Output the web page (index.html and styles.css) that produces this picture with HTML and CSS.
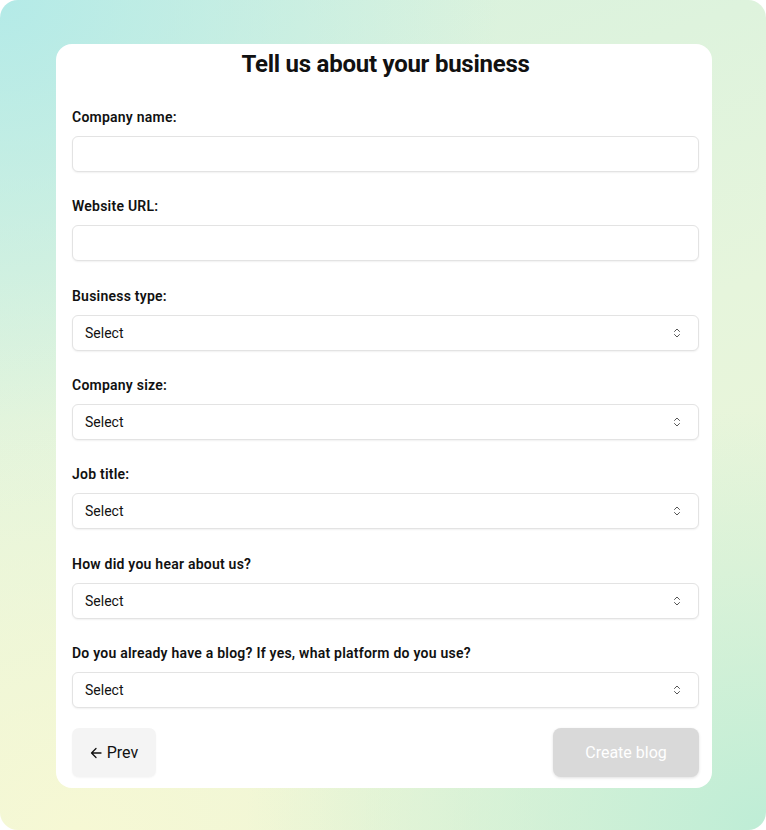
FILE: index.html
```html
<!DOCTYPE html>
<html>
<head>
<meta charset="utf-8">
<link rel="stylesheet" href="styles.css">
</head>
<body>
<div class="bg">
  <form class="card">
    <h1 class="title">Tell us about your business</h1>
    <div class="field">
      <label class="label">Company name:</label>
      <div class="input"></div>
    </div>
    <div class="field">
      <label class="label">Website URL:</label>
      <div class="input"></div>
    </div>
    <div class="field">
      <label class="label">Business type:</label>
      <div class="input select"><span>Select</span><svg class="chev" viewBox="0 0 8 12" width="8" height="12"><path d="M1.5 4.5 L4 2 L6.5 4.5 M1.5 7.5 L4 10 L6.5 7.5" fill="none" stroke="#555" stroke-width="1" stroke-linecap="round" stroke-linejoin="round"/></svg></div>
    </div>
    <div class="field">
      <label class="label">Company size:</label>
      <div class="input select"><span>Select</span><svg class="chev" viewBox="0 0 8 12" width="8" height="12"><path d="M1.5 4.5 L4 2 L6.5 4.5 M1.5 7.5 L4 10 L6.5 7.5" fill="none" stroke="#555" stroke-width="1" stroke-linecap="round" stroke-linejoin="round"/></svg></div>
    </div>
    <div class="field">
      <label class="label">Job title:</label>
      <div class="input select"><span>Select</span><svg class="chev" viewBox="0 0 8 12" width="8" height="12"><path d="M1.5 4.5 L4 2 L6.5 4.5 M1.5 7.5 L4 10 L6.5 7.5" fill="none" stroke="#555" stroke-width="1" stroke-linecap="round" stroke-linejoin="round"/></svg></div>
    </div>
    <div class="field">
      <label class="label">How did you hear about us?</label>
      <div class="input select"><span>Select</span><svg class="chev" viewBox="0 0 8 12" width="8" height="12"><path d="M1.5 4.5 L4 2 L6.5 4.5 M1.5 7.5 L4 10 L6.5 7.5" fill="none" stroke="#555" stroke-width="1" stroke-linecap="round" stroke-linejoin="round"/></svg></div>
    </div>
    <div class="field">
      <label class="label">Do you already have a blog? If yes, what platform do you use?</label>
      <div class="input select"><span>Select</span><svg class="chev" viewBox="0 0 8 12" width="8" height="12"><path d="M1.5 4.5 L4 2 L6.5 4.5 M1.5 7.5 L4 10 L6.5 7.5" fill="none" stroke="#555" stroke-width="1" stroke-linecap="round" stroke-linejoin="round"/></svg></div>
    </div>
    <div class="actions">
      <div class="btn prev"><svg class="arrow" viewBox="0 0 12 12" width="12" height="12"><path d="M11 6 H1.5 M6 1.5 L1.5 6 L6 10.5" fill="none" stroke="#111" stroke-width="1.3" stroke-linecap="round" stroke-linejoin="round"/></svg><span>Prev</span></div>
      <div class="btn create">Create blog</div>
    </div>
  </form>
</div>
</body>
</html>
```
FILE: styles.css
```css
html, body {
  margin: 0;
  padding: 0;
  background: #ffffff;
}
body {
  font-family: "Roboto", "Noto Sans", sans-serif;
  color: #111;
}
.bg {
  width: 766px;
  height: 830px;
  box-sizing: border-box;
  border-radius: 18px;
  padding: 44px 54px 42px 56px;
  background:
    radial-gradient(ellipse 500px 420px at 0% 0%, rgba(178,234,232,0.95), rgba(178,234,232,0) 100%),
    radial-gradient(ellipse 520px 420px at 100% 100%, rgba(190,237,214,1), rgba(190,237,214,0) 100%),
    radial-gradient(ellipse 520px 420px at 10% 100%, rgba(246,248,212,1), rgba(246,248,212,0) 100%),
    linear-gradient(160deg, #d6f1de 0%, #e6f5dc 50%, #eef5d6 100%);
}
.card {
  background: #fff;
  border-radius: 16px;
  height: 744px;
  box-sizing: border-box;
  padding: 6px 13px 0 16px;
  margin: 0;
}
.title {
  margin: 0 0 29px;
  text-align: center;
  font-size: 24px;
  line-height: 28px;
  font-weight: 700;
  letter-spacing: -0.25px;
}
.field {
  display: flex;
  flex-direction: column;
  gap: 9px;
  margin-bottom: 24.33px;
}
.label {
  font-size: 14px;
  line-height: 20px;
  font-weight: 600;
  letter-spacing: 0.23px;
}
.input {
  height: 36px;
  box-sizing: border-box;
  border: 1px solid #e3e3e3;
  border-radius: 6px;
  box-shadow: 0 1px 2px rgba(0,0,0,0.06);
  background: #fff;
}
.select {
  display: flex;
  align-items: center;
  justify-content: space-between;
  padding: 0 17px 0 12px;
  font-size: 14px;
  color: #111;
}
.chev { display: block; }
.actions {
  display: flex;
  justify-content: space-between;
  margin-top: -4.33px;
}
.btn {
  height: 49px;
  box-sizing: border-box;
  display: flex;
  align-items: center;
  justify-content: center;
  font-size: 16px;
  border-radius: 7px;
}
.prev {
  width: 84px;
  gap: 5px;
  background: #f4f4f4;
  color: #111;
  box-shadow: 0 1px 2px rgba(0,0,0,0.04);
}
.arrow { display: block; margin-top: 1px; }
.create {
  width: 146px;
  background: #d9d9d9;
  color: #fff;
  border-radius: 8px;
  box-shadow: 0 1px 3px rgba(0,0,0,0.12);
}
```
